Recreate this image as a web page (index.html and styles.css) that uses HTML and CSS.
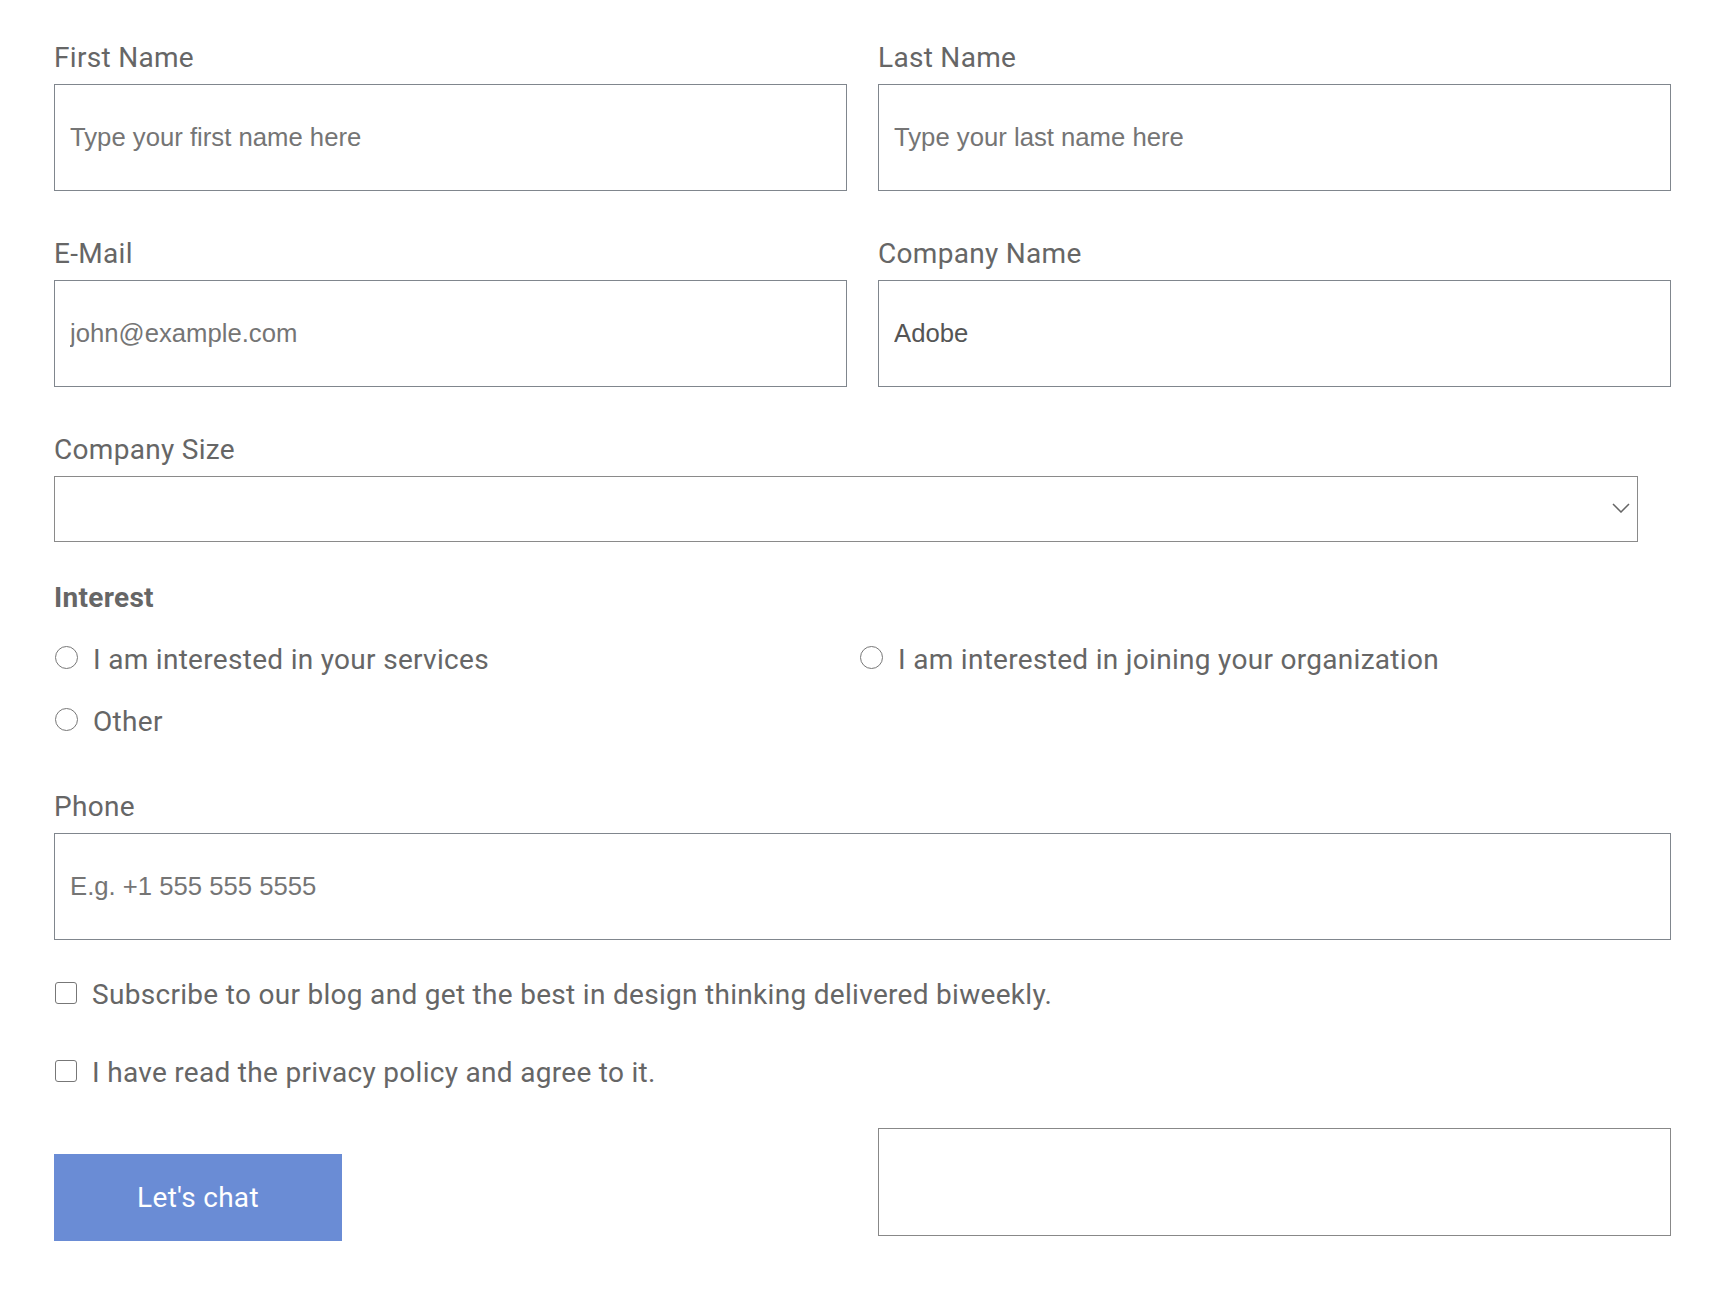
FILE: index.html
```html
<!DOCTYPE html>
<html lang="en">
<head>
<meta charset="utf-8">
<title>Contact form</title>
<link rel="stylesheet" href="styles.css">
</head>
<body>
<form class="form">
  <div class="grid2">
    <div class="field">
      <label class="label" for="fn">First Name</label>
      <input class="input" id="fn" type="text" placeholder="Type your first name here">
    </div>
    <div class="field">
      <label class="label" for="ln">Last Name</label>
      <input class="input" id="ln" type="text" placeholder="Type your last name here">
    </div>
    <div class="field">
      <label class="label" for="em">E-Mail</label>
      <input class="input" id="em" type="email" placeholder="john@example.com">
    </div>
    <div class="field">
      <label class="label" for="cn">Company Name</label>
      <input class="input" id="cn" type="text" value="Adobe">
    </div>
  </div>

  <div class="field field-select">
    <label class="label" for="cs">Company Size</label>
    <div class="select-wrap">
      <select class="select" id="cs"><option></option></select>
      <svg class="chevron" width="18" height="10" viewBox="0 0 18 10"><path d="M1 1 L9 9 L17 1" fill="none" stroke="#666" stroke-width="1.5"/></svg>
    </div>
  </div>

  <fieldset class="interest">
    <legend class="legend">Interest</legend>
    <div class="radios">
      <label class="choice"><input class="radio" type="radio" name="i"><span>I am interested in your services</span></label>
      <label class="choice"><input class="radio" type="radio" name="i"><span>I am interested in joining your organization</span></label>
      <label class="choice"><input class="radio" type="radio" name="i"><span>Other</span></label>
    </div>
  </fieldset>

  <div class="field">
    <label class="label" for="ph">Phone</label>
    <input class="input" id="ph" type="tel" placeholder="E.g. +1 555 555 5555">
  </div>

  <div class="checks">
    <label class="choice"><input class="check" type="checkbox"><span>Subscribe to our blog and get the best in design thinking delivered biweekly.</span></label>
    <label class="choice"><input class="check" type="checkbox"><span>I have read the privacy policy and agree to it.</span></label>
  </div>

  <div class="grid2 bottom">
    <div><button class="btn" type="button">Let's chat</button></div>
    <div class="captcha"></div>
  </div>
</form>
</body>
</html>
```

FILE: styles.css
```css
* { box-sizing: border-box; }
html, body { margin: 0; background: #fff; }
body { font-family: Roboto, "Noto Sans", sans-serif; color: #666; }

.form { padding: 42px 47px 0 54px; }

.grid2 {
  display: grid;
  grid-template-columns: 1fr 1fr;
  column-gap: 31px;
  row-gap: 47px;
}

.field { display: flex; flex-direction: column; }

.label {
  display: block;
  font-size: 28px;
  letter-spacing: 0.3px;
  line-height: 32px;
  color: #666;
  margin-bottom: 10px;
}

.input {
  height: 107px;
  width: 100%;
  border: 1px solid #80868d;
  border-radius: 0;
  padding: 0 15px;
  font-family: "Liberation Sans", Arial, sans-serif;
  font-size: 25.7px;
  color: #555;
  background: #fff;
  outline: none;
}
.input::placeholder { color: #757575; opacity: 1; }

.field-select { margin-top: 47px; }
.select-wrap { position: relative; width: 1584px; }
.select {
  display: block;
  width: 100%;
  height: 66px;
  border: 1px solid #8a8a8a;
  border-radius: 0;
  background: #fff;
  appearance: none;
  -webkit-appearance: none;
  font-size: 25px;
  outline: none;
}
.chevron { position: absolute; right: 8px; top: 27px; }

.interest { border: 0; margin: 40px 0 0; padding: 0; min-width: 0; }
.legend {
  padding: 0;
  font-size: 28px;
  letter-spacing: 0.3px;
  line-height: 32px;
  font-weight: 700;
  color: #666;
}
.radios {
  display: grid;
  grid-template-columns: 805px 1fr;
  row-gap: 22px;
  margin-top: 25px;
}
.choice {
  display: flex;
  align-items: center;
  height: 40px;
  font-size: 28px;
  letter-spacing: 0.3px;
  color: #666;
}
.radio, .check {
  appearance: none;
  -webkit-appearance: none;
  margin: 0 15px 0 1px;
  flex: none;
  background: #fff;
}
.radio {
  width: 23px;
  height: 23px;
  border: 1.5px solid #777;
  border-radius: 50%;
  margin-top: -3px;
}
.interest + .field { margin-top: 50px; }

.checks {
  display: flex;
  flex-direction: column;
  row-gap: 38px;
  margin-top: 34px;
}
.check {
  width: 22px;
  height: 22px;
  border: 1.5px solid #777;
  border-radius: 3px;
  margin-top: -3px;
}

.bottom { margin-top: 36px; align-items: start; }
.btn {
  margin-top: 26px;
  width: 288px;
  height: 87px;
  border: 0;
  background: #6a8cd5;
  color: #fff;
  font-family: Roboto, "Noto Sans", sans-serif;
  font-size: 28px;
  letter-spacing: 0.3px;
}
.captcha {
  height: 108px;
  border: 1px solid #888;
}
```
